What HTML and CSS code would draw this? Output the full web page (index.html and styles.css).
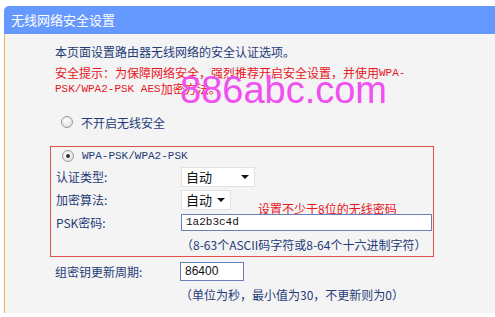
FILE: index.html
```html
<!DOCTYPE html>
<html lang="zh-CN">
<head>
    <meta charset="UTF-8">
    <title>无线网络安全设置</title>
    <link rel="stylesheet" href="styles.css">
</head>
<body>

<div class="panel">
    <div class="panel-title">无线网络安全设置</div>

    <div class="panel-body">
        <p class="intro">本页面设置路由器无线网络的安全认证选项。</p>
        <p class="warn">安全提示：为保障网络安全，强烈推荐开启安全设置，并使用<span class="mono">WPA-</span><br><span class="mono">PSK/WPA2-PSK AES</span>加密方法。</p>
        <div class="watermark">886abc.com</div>

        <div class="radio-row off">
            <span class="radio"></span>
            <span>不开启无线安全</span>
        </div>

        <div class="secure-box">
            <div class="radio-row">
                <span class="radio checked"></span>
                <span class="mono">WPA-PSK/WPA2-PSK</span>
            </div>
            <div class="form-row">
                <label>认证类型:</label>
                <div class="select wide">自动<span class="arrow"></span></div>
            </div>
            <div class="form-row">
                <label>加密算法:</label>
                <div class="select narrow">自动<span class="arrow"></span></div>
                <span class="hint-red">设置不少于8位的无线密码</span>
            </div>
            <div class="form-row">
                <label>PSK密码:</label>
                <div class="input psk mono">1a2b3c4d</div>
            </div>
            <div class="note">（8-63个ASCII码字符或8-64个十六进制字符）</div>
        </div>

        <div class="form-row group">
            <label>组密钥更新周期:</label>
            <div class="input period">86400</div>
        </div>
        <div class="note last">（单位为秒，最小值为30，不更新则为0）</div>
    </div>
</div>

</body>
</html>
```

FILE: styles.css
```css
body {
    margin: 0;
    background: #fff;
    font-family: "Noto Sans CJK SC", "DejaVu Sans", sans-serif;
    font-size: 12px;
    color: #1f3b78;
}

p {
    margin: 0;
}

.panel {
    margin: 6px 0 0 4px;
}

.panel-title {
    background: #6699ff;
    color: #fff;
    height: 28px;
    line-height: 27px;
    padding-left: 7px;
    font-size: 13px;
    border-top-left-radius: 5px;
}

.panel-body {
    position: relative;
    background: #f4f4f4;
    border-left: 1px solid #f5b24a;
    height: 279px;
    padding-left: 50px;
    box-sizing: border-box;
    padding-top: 10px;
}

.intro {
    line-height: 16px;
}

.warn {
    color: #e8141e;
    line-height: 16px;
    margin-top: 5px;
}

.warn .mono {
    vertical-align: top;
}

.watermark {
    position: absolute;
    left: 175px;
    top: 36px;
    color: #f050f0;
    font-family: "Liberation Sans", Arial, sans-serif;
    font-size: 38px;
    line-height: 40px;
}

.radio-row {
    display: flex;
    align-items: center;
    gap: 8px;
    height: 18px;
}

.radio-row.off {
    margin: 16px 0 0 6px;
}

.radio {
    width: 10px;
    height: 10px;
    border-radius: 50%;
    border: 1px solid #9a9a9a;
    background: radial-gradient(circle at 40% 35%, #fff, #d8d8d8);
    display: inline-block;
    position: relative;
}

.radio.checked::after {
    content: "";
    position: absolute;
    left: 3px;
    top: 3px;
    width: 4px;
    height: 4px;
    border-radius: 50%;
    background: #333;
}

.mono {
    font-family: "Liberation Mono", monospace;
    font-size: 11px;
}

.secure-box {
    border: 1px solid #dd5050;
    width: 384px;
    box-sizing: border-box;
    margin: 15px 0 0 -5px;
    padding: 0 0 0 5px;
}

.secure-box > .radio-row {
    margin-left: 6px;
}

.form-row {
    display: flex;
    align-items: center;
    height: 23px;
}

.form-row label {
    width: 125px;
    flex: none;
}

.select {
    height: 20px;
    box-sizing: border-box;
    border: 1px solid #e2e2e2;
    background: #fff;
    color: #111;
    font-size: 13px;
    display: flex;
    align-items: center;
    justify-content: space-between;
    padding: 0 5px 0 4px;
}

.select.wide {
    width: 74px;
}

.select.narrow {
    width: 50px;
}

.arrow {
    width: 0;
    height: 0;
    border-left: 4px solid transparent;
    border-right: 4px solid transparent;
    border-top: 4px solid #111;
}

.hint-red {
    color: #e8141e;
    margin: 18px 0 0 27px;
}

.input {
    height: 17px;
    box-sizing: border-box;
    border: 1px solid #6b7fb8;
    background: #fff;
    color: #111;
    line-height: 15px;
    padding-left: 4px;
}

.input.psk {
    width: 251px;
}

.input.period {
    width: 64px;
    height: 19px;
    line-height: 17px;
    font-family: "Liberation Sans", Arial, sans-serif;
}

.note {
    padding-left: 125px;
    line-height: 22px;
}

.form-row.group {
    margin-top: 2px;
    height: 24px;
}

.note.last {
    line-height: 24px;
}
```
